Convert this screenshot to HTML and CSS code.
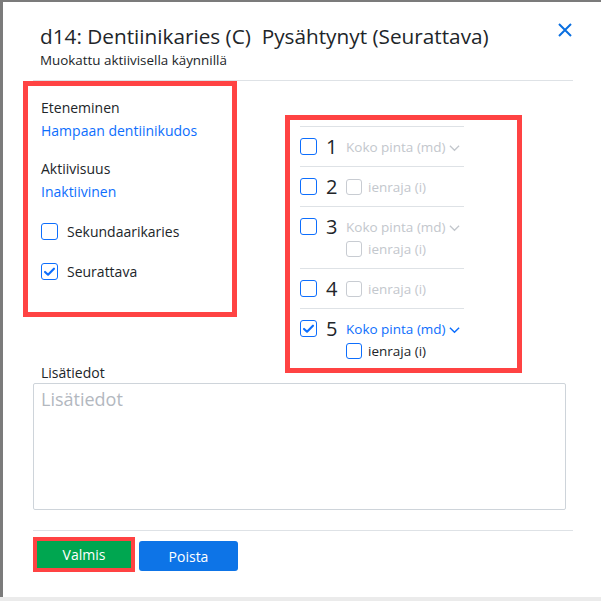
FILE: index.html
```html
<!DOCTYPE html>
<html lang="fi">
<head>
<meta charset="utf-8">
<link rel="stylesheet" href="styles.css">
</head>
<body>
<div class="modal">
  <div class="header">
    <div class="titles">
      <h1 class="title">d14: Dentiinikaries (C)&nbsp; Pysähtynyt (Seurattava)</h1>
      <div class="subtitle">Muokattu aktiivisella käynnillä</div>
    </div>
    <button class="close" aria-label="Sulje">
      <svg width="16" height="16" viewBox="0 0 16 16"><path d="M2 2 L14 14 M14 2 L2 14" stroke="#0a6fe0" stroke-width="2" fill="none"/></svg>
    </button>
  </div>

  <div class="content">
    <div class="left-box">
      <div class="field-label">Eteneminen</div>
      <a class="field-value">Hampaan dentiinikudos</a>
      <div class="field-label spaced">Aktiivisuus</div>
      <a class="field-value">Inaktiivinen</a>
      <label class="check-row first"><span class="cb"></span>Sekundaarikaries</label>
      <label class="check-row"><span class="cb checked"><svg viewBox="0 0 16 16" width="13" height="13"><path d="M2.5 8.5 L6.2 12 L13.5 4.5" stroke="#0d6efd" stroke-width="2.6" fill="none" stroke-linecap="round" stroke-linejoin="round"/></svg></span>Seurattava</label>
    </div>

    <div class="right-box">
      <div class="surfaces">
        <div class="srow">
          <span class="cb"></span><span class="num">1</span>
          <div class="opts"><span class="opt muted">Koko pinta (md)<svg class="chev" viewBox="0 0 12 8" width="11" height="8"><path d="M1 1.5 L6 6.5 L11 1.5" stroke="currentColor" stroke-width="1.4" fill="none"/></svg></span></div>
        </div>
        <div class="srow">
          <span class="cb"></span><span class="num">2</span>
          <div class="opts"><span class="opt muted"><span class="cb sm muted-cb"></span>ienraja (i)</span></div>
        </div>
        <div class="srow">
          <span class="cb"></span><span class="num">3</span>
          <div class="opts">
            <span class="opt muted">Koko pinta (md)<svg class="chev" viewBox="0 0 12 8" width="11" height="8"><path d="M1 1.5 L6 6.5 L11 1.5" stroke="currentColor" stroke-width="1.4" fill="none"/></svg></span>
            <span class="opt muted"><span class="cb sm muted-cb"></span>ienraja (i)</span>
          </div>
        </div>
        <div class="srow">
          <span class="cb"></span><span class="num">4</span>
          <div class="opts"><span class="opt muted"><span class="cb sm muted-cb"></span>ienraja (i)</span></div>
        </div>
        <div class="srow">
          <span class="cb checked"><svg viewBox="0 0 16 16" width="13" height="13"><path d="M2.5 8.5 L6.2 12 L13.5 4.5" stroke="#0d6efd" stroke-width="2.6" fill="none" stroke-linecap="round" stroke-linejoin="round"/></svg></span><span class="num">5</span>
          <div class="opts">
            <span class="opt active">Koko pinta (md)<svg class="chev" viewBox="0 0 12 8" width="11" height="8"><path d="M1 1.5 L6 6.5 L11 1.5" stroke="currentColor" stroke-width="1.6" fill="none"/></svg></span>
            <span class="opt"><span class="cb sm"></span>ienraja (i)</span>
          </div>
        </div>
      </div>
    </div>
  </div>

  <div class="notes">
    <div class="notes-label">Lisätiedot</div>
    <textarea class="notes-input" placeholder="Lisätiedot"></textarea>
  </div>

  <div class="footer">
    <div class="valmis-wrap"><button class="btn btn-green">Valmis</button></div>
    <button class="btn btn-blue">Poista</button>
  </div>
  <div class="bottom-band"></div>
</div>
</body>
</html>
```

FILE: styles.css
```css
* { box-sizing: border-box; }
html, body {
  margin: 0;
  padding: 0;
  width: 601px;
  height: 601px;
  overflow: hidden;
  background: #7b7b7b;
  font-family: "Open Sans", "Noto Sans", sans-serif;
  color: #212529;
}
.modal {
  margin: 2px 0 0 3px;
  height: 599px;
  background: #fff;
  padding: 0 28px 0 20px;
  display: flex;
  flex-direction: column;
  position: relative;
}
.header {
  margin-left: 10px;
  padding: 21px 0 0 7px;
  height: 79px;
  border-bottom: 1px solid #dee2e6;
  display: flex;
  justify-content: space-between;
}
.title {
  margin: 0;
  font-size: 20.75px;
  font-weight: 400;
  line-height: 27px;
  color: #212529;
}
.subtitle {
  font-size: 13.4px;
  line-height: 18px;
  margin-top: 1px;
}
.close {
  border: 0;
  background: none;
  padding: 0;
  width: 16px;
  height: 16px;
  margin-top: -1px;
  margin-right: 0;
}
.content {
  display: flex;
  gap: 48px;
  align-items: flex-start;
}
.left-box {
  width: 214px;
  height: 236px;
  border: 5px solid #ff4343;
  padding: 10px 0 0 13px;
  display: flex;
  flex-direction: column;
  font-size: 14px;
  line-height: 23px;
}
.field-label { color: #212529; }
.field-label.spaced { margin-top: 15px; }
.field-value { color: #0d6efd; text-decoration: none; }
.check-row {
  display: flex;
  align-items: center;
  gap: 9px;
  height: 23px;
  margin-top: 17px;
}
.cb {
  width: 17px;
  height: 17px;
  border: 1.5px solid #0d6efd;
  border-radius: 3px;
  display: inline-flex;
  align-items: center;
  justify-content: center;
  flex: none;
  background: #fff;
}
.right-box {
  margin-top: 34px;
  width: 237px;
  height: 258px;
  border: 5px solid #ff4343;
  padding: 6px 0 0 10px;
}
.surfaces { width: 164px; }
.srow {
  border-top: 1px solid #dee2e6;
  display: flex;
  align-items: flex-start;
  padding: 9px 0 8px;
}
.srow > .cb { margin-top: 2px; }
.num {
  font-size: 20px;
  line-height: 22px;
  width: 20px;
  margin-left: 9px;
  color: #212529;
}
.opts {
  display: flex;
  flex-direction: column;
}
.opt {
  display: flex;
  align-items: center;
  font-size: 13.5px;
  height: 22px;
  white-space: nowrap;
  color: #212529;
}
.opt.muted { color: #c3c7cd; }
.opt.active { color: #0d6efd; }
.chev { margin-left: 3px; margin-top: 1px; }
.cb.sm {
  width: 16px;
  height: 16px;
  margin-right: 6px;
}
.cb.muted-cb { border-color: #c8ccd2; }
.notes {
  margin-left: 10px;
  margin-top: -10px;
}
.notes-label {
  font-size: 14px;
  line-height: 20px;
  padding-left: 8px;
}
.notes-input {
  display: block;
  width: 533px;
  height: 127px;
  border: 1px solid #ced4da;
  border-radius: 2px;
  padding: 3px 7px;
  font-family: inherit;
  font-size: 18px;
  resize: none;
  margin: 0;
}
.notes-input::placeholder { color: #b3b8bf; }
.footer {
  margin-left: 10px;
  margin-top: 20px;
  border-top: 1px solid #dee2e6;
  padding-top: 6px;
  display: flex;
  align-items: flex-start;
  gap: 4px;
}
.valmis-wrap {
  border: 4px solid #ff4343;
  width: 102px;
  height: 35px;
}
.btn {
  border: 0;
  font-family: inherit;
  font-size: 14px;
  color: #fff;
  padding: 0;
}
.btn-green {
  background: #00a650;
  width: 94px;
  height: 27px;
}
.btn-blue {
  background: #0d74e7;
  width: 99px;
  height: 30px;
  border-radius: 3px;
  margin-top: 4px;
}
.bottom-band {
  position: absolute;
  left: -3px;
  right: 0;
  bottom: 0;
  height: 4px;
  background: #ebebeb;
}
```
